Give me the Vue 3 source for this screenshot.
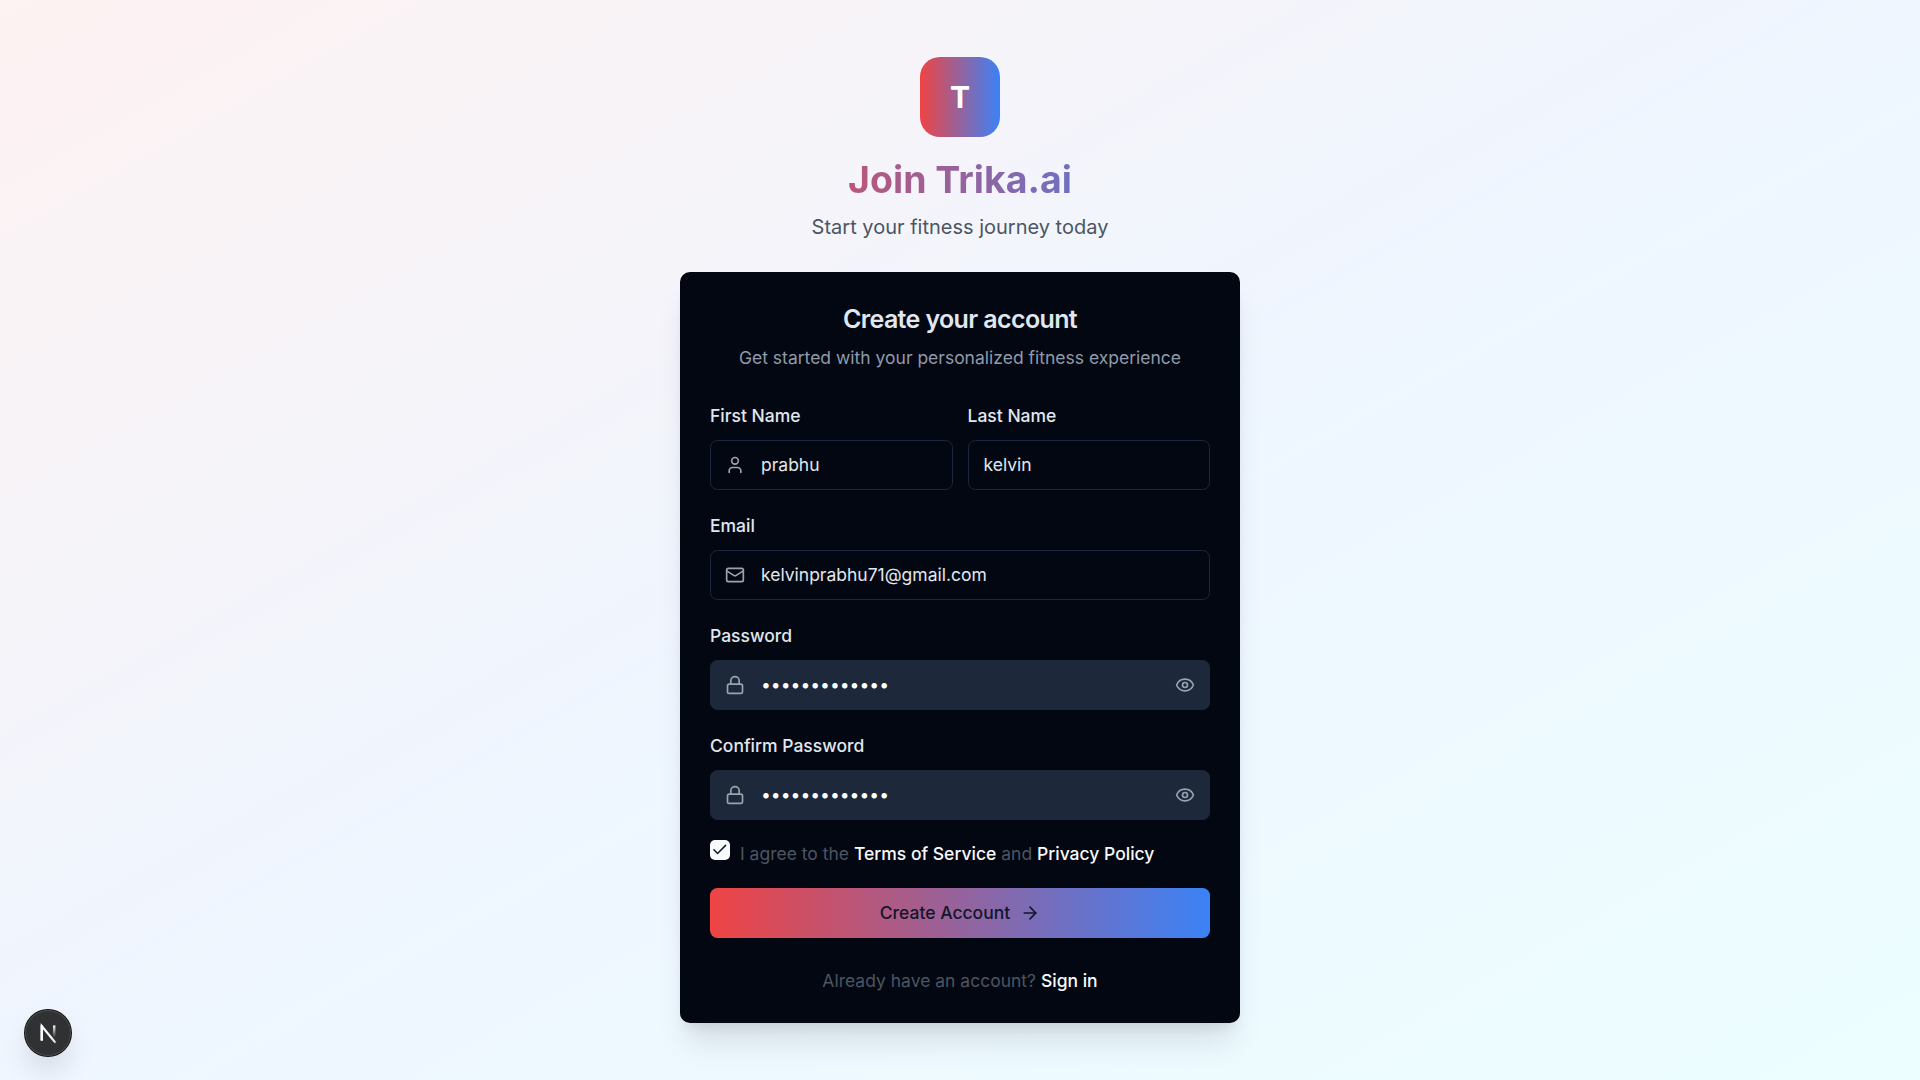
<script setup>
import { ref } from 'vue'

const firstName = ref('prabhu')
const lastName = ref('kelvin')
const email = ref('kelvinprabhu71@gmail.com')
const secrets = ref([
  { id: 'password', label: 'Password', value: 'trikafitness1' },
  { id: 'confirm', label: 'Confirm Password', value: 'trikafitness1' },
])
</script>

<template>
  <main class="page">
    <div class="column">
      <header class="intro">
        <div class="logo">T</div>
        <h1>Join Trika.ai</h1>
        <p>Start your fitness journey today</p>
      </header>

      <section class="card">
        <div class="card-head">
          <h2>Create your account</h2>
          <p>Get started with your personalized fitness experience</p>
        </div>

        <form class="form" @submit.prevent>
          <div class="names">
            <div class="field">
              <label for="first">First Name</label>
              <div class="control">
                <svg class="icon" viewBox="0 0 24 24"><path d="M19 21v-2a4 4 0 0 0-4-4H9a4 4 0 0 0-4 4v2" /><circle cx="12" cy="7" r="4" /></svg>
                <input id="first" v-model="firstName" type="text" />
              </div>
            </div>
            <div class="field">
              <label for="last">Last Name</label>
              <div class="control plain">
                <input id="last" v-model="lastName" type="text" />
              </div>
            </div>
          </div>

          <div class="field">
            <label for="email">Email</label>
            <div class="control">
              <svg class="icon" viewBox="0 0 24 24"><rect width="20" height="16" x="2" y="4" rx="2" /><path d="m22 7-8.97 5.7a1.94 1.94 0 0 1-2.06 0L2 7" /></svg>
              <input id="email" v-model="email" type="text" />
            </div>
          </div>

          <div v-for="s in secrets" :key="s.id" class="field">
            <label :for="s.id">{{ s.label }}</label>
            <div class="control filled">
              <svg class="icon" viewBox="0 0 24 24"><rect width="18" height="11" x="3" y="11" rx="2" ry="2" /><path d="M7 11V7a5 5 0 0 1 10 0v4" /></svg>
              <input :id="s.id" v-model="s.value" type="password" />
              <svg class="icon eye" viewBox="0 0 24 24"><path d="M2.062 12.348a1 1 0 0 1 0-.696 10.75 10.75 0 0 1 19.876 0 1 1 0 0 1 0 .696 10.75 10.75 0 0 1-19.876 0" /><circle cx="12" cy="12" r="3" /></svg>
            </div>
          </div>

          <div class="agree">
            <span class="checkbox">
              <svg viewBox="0 0 24 24"><path d="M20 6 9 17l-5-5" /></svg>
            </span>
            <span class="terms">I agree to the <a>Terms of Service</a> and <a>Privacy Policy</a></span>
          </div>

          <button class="submit" type="submit">
            <span>Create Account</span>
            <svg viewBox="0 0 24 24"><path d="M5 12h14" /><path d="m12 5 7 7-7 7" /></svg>
          </button>
        </form>

        <p class="signin">Already have an account? <a>Sign in</a></p>
      </section>
    </div>

    <div class="dev-badge">
      <svg viewBox="0 0 40 40" fill="none">
        <defs>
          <linearGradient id="diag" x1="22.5" y1="22.5" x2="28.5" y2="30" gradientUnits="userSpaceOnUse">
            <stop stop-color="#fff" /><stop offset="0.6" stop-color="#fff" stop-opacity="0.85" /><stop offset="1" stop-color="#fff" stop-opacity="0" />
          </linearGradient>
          <linearGradient id="stem" x1="25.6" y1="13" x2="25.6" y2="24" gradientUnits="userSpaceOnUse">
            <stop stop-color="#fff" /><stop offset="1" stop-color="#fff" stop-opacity="0" />
          </linearGradient>
        </defs>
        <path d="M14.6 26.6V14l12 14.6" stroke="url(#diag)" stroke-width="2" />
        <path d="M14.6 26.6V13.4" stroke="#fff" stroke-width="2.1" />
        <path d="M25.4 13.4V24" stroke="url(#stem)" stroke-width="2.1" />
      </svg>
    </div>
  </main>
</template>

<style>
body {
  margin: 0;
}
</style>

<style scoped>
.page,
.page * {
  box-sizing: border-box;
}
.page {
  min-height: 1080px;
  display: flex;
  align-items: center;
  justify-content: center;
  background: linear-gradient(to bottom right, #fef2f2, #eff6ff, #ecfeff);
  font-family: Inter, "Liberation Sans", sans-serif;
  font-size: 20px;
  line-height: 30px;
}
h1,
h2,
p {
  margin: 0;
}
.column {
  width: 560px;
}
.intro {
  display: flex;
  flex-direction: column;
  align-items: center;
  margin-bottom: 30px;
}
.logo {
  width: 80px;
  height: 80px;
  border-radius: 20px;
  margin-bottom: 20px;
  display: flex;
  align-items: center;
  justify-content: center;
  color: #fff;
  font-size: 30px;
  font-weight: 700;
  background: linear-gradient(to right, #ef4444, #3b82f6);
}
h1 {
  width: 100%;
  text-align: center;
  font-size: 37.5px;
  line-height: 45px;
  font-weight: 700;
  margin-bottom: 10px;
  color: transparent;
  background: linear-gradient(to right, #ef4444, #3b82f6);
  background-clip: text;
  -webkit-background-clip: text;
}
.intro p {
  color: #4b5563;
}
.card {
  padding: 30px;
  border-radius: 10px;
  background: #030711;
  color: #e1e7ef;
  font-size: 17.5px;
  line-height: 25px;
  box-shadow: 0 25px 31.25px -6.25px rgba(0, 0, 0, 0.1), 0 10px 12.5px -7.5px rgba(0, 0, 0, 0.1);
}
.card-head {
  text-align: center;
  margin-bottom: 30px;
}
h2 {
  font-size: 25px;
  line-height: 35px;
  font-weight: 600;
  letter-spacing: -0.625px;
  margin-bottom: 8px;
}
.card-head p {
  color: #8f9bab;
}
.form {
  display: flex;
  flex-direction: column;
  gap: 20px;
}
.names {
  display: grid;
  grid-template-columns: repeat(2, minmax(0, 1fr));
  gap: 15px;
}
.field {
  display: flex;
  flex-direction: column;
  gap: 9px;
}
label {
  padding-top: 1px;
  line-height: 30px;
  font-weight: 500;
}
.control {
  height: 50px;
  display: flex;
  align-items: center;
  padding: 0 14px;
  border: 1px solid #1d283a;
  border-radius: 7.5px;
}
.plain {
  padding: 0 15px;
}
.filled {
  background: #1d283a;
}
.icon {
  width: 20px;
  height: 20px;
  flex: none;
  margin-right: 16px;
  fill: none;
  stroke: #9ca3af;
  stroke-width: 2;
  stroke-linecap: round;
  stroke-linejoin: round;
}
.icon.eye {
  margin: 0;
}
input {
  flex: 1;
  min-width: 0;
  padding: 0 0 0.5px;
  border: 0;
  outline: 0;
  background: transparent;
  color: inherit;
  font: inherit;
}
.filled input {
  color: #fff;
}
.agree {
  height: 28px;
  display: flex;
  align-items: flex-start;
  gap: 10px;
}
.checkbox {
  width: 20px;
  height: 20px;
  display: flex;
  align-items: center;
  justify-content: center;
  border-radius: 5px;
  background: #f8fafc;
}
.checkbox svg {
  width: 17.5px;
  height: 17.5px;
  fill: none;
  stroke: #0f172a;
  stroke-width: 2;
  stroke-linecap: round;
  stroke-linejoin: round;
}
.terms {
  padding-top: 1px;
  color: #4b5563;
}
a {
  color: #f8fafc;
  font-weight: 500;
}
.submit {
  height: 50px;
  padding: 0;
  border: 0;
  border-radius: 7.5px;
  display: flex;
  align-items: center;
  justify-content: center;
  gap: 10px;
  color: #0f172a;
  font: inherit;
  font-weight: 500;
  background: linear-gradient(to right, #ef4444, #3b82f6);
}
.submit span {
  padding-bottom: 1px;
}
.submit svg {
  width: 20px;
  height: 20px;
  fill: none;
  stroke: currentColor;
  stroke-width: 2;
  stroke-linecap: round;
  stroke-linejoin: round;
}
.signin {
  margin-top: 30px;
  text-align: center;
  color: #4b5563;
}
.dev-badge {
  position: fixed;
  left: 24.5px;
  bottom: 24.5px;
  width: 46px;
  height: 46px;
  border-radius: 50%;
  background: #303132;
  box-shadow: 0 0 0 1px #0d0d0d, inset 0 0 0 1px #4a4a4a, 0 16px 32px -8px rgba(0, 0, 0, 0.24);
}
.dev-badge svg {
  display: block;
  width: 46px;
  height: 46px;
}
</style>
